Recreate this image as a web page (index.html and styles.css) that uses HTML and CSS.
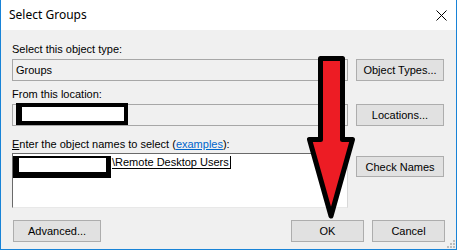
FILE: index.html
```html
<!DOCTYPE html>
<html>
<head>
<meta charset="utf-8">
<link rel="stylesheet" href="styles.css">
</head>
<body>
<div class="window">
  <div class="titlebar">
    <span class="title">Select Groups</span>
    <svg class="close" width="11" height="11" viewBox="0 0 11 11"><path d="M0.5 0.5 L10.5 10.5 M10.5 0.5 L0.5 10.5" stroke="#000" stroke-width="1" fill="none"/></svg>
  </div>
  <div class="content">
    <div class="label l1">Select this object type:</div>
    <div class="row r1">
      <div class="field ro">Groups</div>
      <div class="btn side">Object Types...</div>
    </div>
    <div class="label l2">From this location:</div>
    <div class="row r2">
      <div class="field ro"></div>
      <div class="btn side">Locations...</div>
    </div>
    <div class="label l3"><u>E</u>nter the object names to select (<span class="link">examples</span>):</div>
    <div class="row r3">
      <div class="field names"><span class="hidden"></span><span class="sel">\Remote Desktop Users</span></div>
      <div class="btn side check">Check Names</div>
    </div>
    <div class="row bottom">
      <div class="btn adv">Advanced...</div>
      <div class="spacer"></div>
      <div class="btn small">OK</div>
      <div class="btn small">Cancel</div>
    </div>
  </div>
  <div class="redact red1"></div>
  <div class="redact red2"></div>
  <svg class="arrow" width="457" height="250" viewBox="0 0 457 250">
    <polygon points="320.5,58.5 342.5,58.5 342.5,139.5 352.5,139.5 331,216 309.5,139.5 320.5,139.5" fill="#ed1c24" stroke="#000" stroke-width="5" stroke-linejoin="round"/>
  </svg>
  <svg class="grip" width="8" height="8" viewBox="0 0 8 8">
    <rect x="6" y="0" width="2" height="2" fill="#bcbcbc"/>
    <rect x="3" y="3" width="2" height="2" fill="#bcbcbc"/>
    <rect x="6" y="3" width="2" height="2" fill="#bcbcbc"/>
    <rect x="0" y="6" width="2" height="2" fill="#bcbcbc"/>
    <rect x="3" y="6" width="2" height="2" fill="#bcbcbc"/>
    <rect x="6" y="6" width="2" height="2" fill="#bcbcbc"/>
  </svg>
</div>
</body>
</html>
```
FILE: styles.css
```css
html, body { margin: 0; padding: 0; }
body { width: 457px; height: 250px; overflow: hidden; background: #f0f0f0; }
.window {
  position: relative;
  width: 457px; height: 250px;
  box-sizing: border-box;
  border: 1px solid #1883d7;
  border-top: none;
  background: #f0f0f0;
  font-family: "Liberation Sans", Arial, sans-serif;
  font-size: 11px;
  color: #000;
}
.titlebar {
  height: 30px;
  background: #fff;
  display: flex;
  align-items: center;
  justify-content: space-between;
  padding: 0 9px 0 8px;
}
.title { font-family: "Noto Sans", sans-serif; font-size: 12px; margin-top: -1px; }
.close { margin-top: 1px; }
.content { padding: 13px 11px 0 11px; }
.label { height: 13px; line-height: 13px; white-space: nowrap; }
.l2 { margin-top: 7px; }
.l3 { margin-top: 12px; }
.link { color: #0066cc; text-decoration: underline; }
.row { display: flex; gap: 8px; margin-top: 3px; }
.r3 { margin-top: 2px; }
.field {
  width: 336px; height: 22px;
  box-sizing: border-box;
  border: 1px solid #a7a7a7;
  padding: 3px 3px;
  line-height: 14px;
}
.ro { background: #f0f0f0; }
.names {
  height: 55px;
  background: #fff;
  border-top-color: #6a6a6a;
  border-left-color: #6a6a6a;
  border-right-color: #d8d8d8;
  border-bottom-color: #e8e8e8;
  padding: 2px 0 0 1px;
  display: flex;
  align-items: flex-start;
}
.hidden { display: inline-block; width: 98px; height: 12px; }
.sel {
  line-height: 12px;
  border-bottom: 1px solid #000;
  border-right: 1px solid #000;
  padding-right: 1px;
}
.btn {
  box-sizing: border-box;
  height: 22px;
  background: #e1e1e1;
  border: 1px solid #adadad;
  display: flex; align-items: center; justify-content: center;
  white-space: nowrap;
}
.side { width: 88px; }
.check { margin-top: 3px; height: 21px; }
.bottom { margin-top: 12px; padding-left: 1px; }
.adv { width: 88px; }
.spacer { flex: 1; }
.small { width: 73px; }
.redact {
  position: absolute;
  box-sizing: border-box;
  background: #fff;
  border: solid #000;
}
.red1 { left: 15px; top: 103px; width: 112px; height: 22px; border-width: 4px 4px 4px 6px; }
.red2 { left: 12px; top: 156px; width: 98px; height: 22px; border-width: 2px 5px 6px 6px; }
.arrow { position: absolute; left: -1px; top: 0; }
.grip { position: absolute; right: 1px; bottom: 1px; }
```
